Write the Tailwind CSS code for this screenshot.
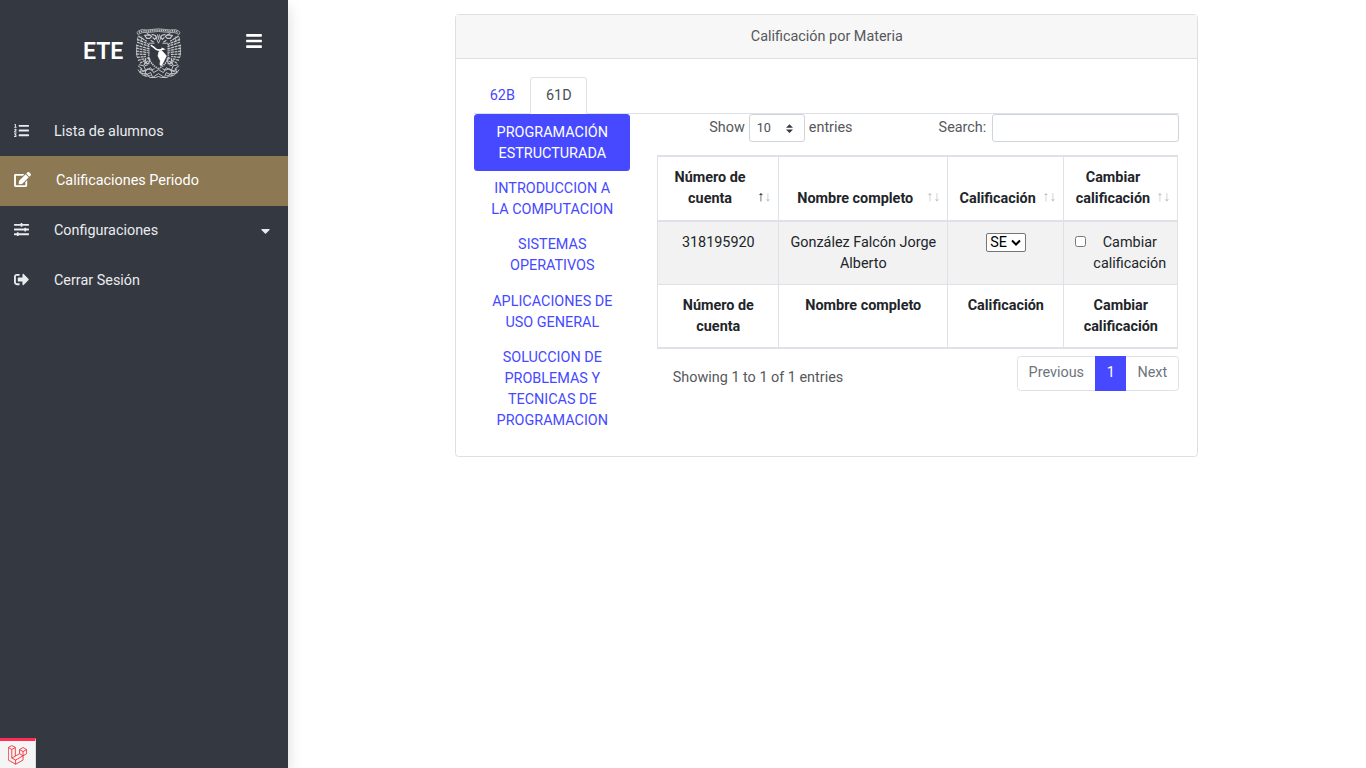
<!DOCTYPE html>
<html lang="es">
<head>
<meta charset="utf-8">
<title>Calificación por Materia</title>
<script src="https://cdn.jsdelivr.net/npm/@tailwindcss/browser@4"></script>
</head>
<body class="flex h-[768px] overflow-hidden bg-white font-[Roboto,sans-serif] text-[14.4px] leading-[21.12px] text-[#212529]">
<aside class="relative h-full w-72 shrink-0 bg-[#343840] text-[#e9ecef] shadow-[0_7px_14px_rgba(0,0,0,0.15)]">
  <div class="flex h-[106px] pl-[83px] pt-[27px]">
    <span class="w-[52px] pt-[10px] text-[23px] font-semibold leading-[30px] text-white">ETE</span>
    <svg class="h-[54px] w-[47px]" viewBox="0 0 48 54" fill="none" stroke="#c4c6c9" stroke-width=".8">
      <path d="M2 5Q5 1 12 2.5Q24 0 36 2.5Q43 1 46 5L45 7Q40 4 35 5Q24 3 13 5Q8 4 3 7Z"/>
      <path d="M4 4.7Q9 2.7 13 3.8Q24 1.7 35 3.8Q39 2.7 44 4.7" stroke-dasharray="1.2 .7" stroke-width="1.6"/>
      <g id="wing">
        <path d="M4 8Q2 10 3 14M2 18Q1 24 2 30M7 9L6 15"/>
        <path d="M4 9L12 14M2 12L13 16.500M2 15L14 19M1 18L14 21.500M1 21L13 23.500M1 24L13 25.500M1 27L12 27.500M2 30.500L11 29.500M3 33.500L11 31.500M5 36.500L10 33.500" stroke-width="1.300" stroke-dasharray="3 .7"/>
        <path d="M10 8L15 7.500L17 9L15 11L12 11Z" stroke-width="1.2"/>
        <path d="M17 7L21 8L22 10L20 12L18 10M16 13L19 15M12 6L15 7.500" stroke-width="1.2"/>
        <path d="M12 31L15 32L14 37L10 36L11 32M9 38L13 34M10 39L13 38" stroke-width="1.3"/>
        <path d="M14 16.500V30Q15 37 24 42" stroke-dasharray="1.400 .8" stroke-width="1.700"/>
        <path d="M3 39L7 42L5 46L11 44L10 49L16 46L18 51L24 47M4 38L9 39L11 44L16 41L19 46L24 43M3 43L6 47L12 47L15 51L21 51L24 50M5 42Q9 46 13 42Q17 45 20 42M7 48Q11 51 16 49" stroke-width="1"/>
      </g>
      <use href="#wing" transform="matrix(-1 0 0 1 48 0)"/>
      <path d="M21 9L24 16L27 9M23 7L24 12L25 7M14 16H20M28 16H34" stroke-width="1"/>
      <path d="M16 18L19 20L22 22.500L25 23L29 22L27 21" stroke="#fff" stroke-width="1.600"/>
      <path d="M24.500 24.500L27 23.500L30 26.500L32 29L30 33L27 39L25.500 38L26 34L23.500 29Z" fill="#fff" stroke="#fff"/>
    </svg>
    <svg class="ml-[64px] mt-[5px] h-[18px] w-[16px]" viewBox="0 0 448 512" fill="#fff"><path d="M16 132h416c8.800 0 16-7.200 16-16V76c0-8.800-7.200-16-16-16H16C7.200 60 0 67.200 0 76v40c0 8.800 7.200 16 16 16zm0 160h416c8.800 0 16-7.200 16-16v-40c0-8.800-7.200-16-16-16H16c-8.800 0-16 7.200-16 16v40c0 8.800 7.200 16 16 16zm0 160h416c8.800 0 16-7.200 16-16v-40c0-8.800-7.200-16-16-16H16c-8.800 0-16 7.200-16 16v40c0 8.800 7.200 16 16 16z"/></svg>
  </div>
  <nav>
    <a class="flex h-[50px] items-center pl-[14px]">
      <svg class="-mt-px mr-[25px] h-[15px] w-[15px]" viewBox="0 0 512 512" fill="currentColor"><path d="M61.77 401l17.5-20.15a19.92 19.92 0 0 0 5.07-14.19v-3.31C84.34 356 80.5 352 73 352H16a8 8 0 0 0-8 8v16a8 8 0 0 0 8 8h22.83a157.41 157.41 0 0 0-11 12.31l-5.61 7c-4 5.07-5.25 10.13-2.8 14.88l1.05 1.93c3 5.76 6.29 7.88 12.25 7.88h4.73c10.33 0 15.94 2.44 15.94 9.09 0 4.72-4.2 8.22-14.36 8.22a41.54 41.54 0 0 1-15.47-3.12c-6.49-3.88-11.74-3.5-15.6 3.12l-5.59 9.31c-3.72 6.13-3.19 11.72 2.63 15.94 7.71 4.69 20.38 9.44 37 9.44 34.16 0 48.5-22.75 48.5-44.12-.03-14.38-9.12-29.76-28.73-34.88zM496 224H176a16 16 0 0 0-16 16v32a16 16 0 0 0 16 16h320a16 16 0 0 0 16-16v-32a16 16 0 0 0-16-16zm0-160H176a16 16 0 0 0-16 16v32a16 16 0 0 0 16 16h320a16 16 0 0 0 16-16V80a16 16 0 0 0-16-16zm0 320H176a16 16 0 0 0-16 16v32a16 16 0 0 0 16 16h320a16 16 0 0 0 16-16v-32a16 16 0 0 0-16-16zM16 160h64a8 8 0 0 0 8-8v-16a8 8 0 0 0-8-8H64V40a8 8 0 0 0-8-8H32a8 8 0 0 0-7.14 4.42l-8 16A8 8 0 0 0 24 64h8v64H16a8 8 0 0 0-8 8v16a8 8 0 0 0 8 8zm-3.91 160H80a8 8 0 0 0 8-8v-16a8 8 0 0 0-8-8H41.32c3.29-10.29 48.34-18.68 48.34-56.44 0-29.06-25-39.56-44.47-39.56-21.36 0-33.8 10-40.46 18.75-4.37 5.59-3 10.84 2.8 15.37l8.58 6.88c5.61 4.56 11 2.47 16.12-2.44a13.44 13.44 0 0 1 9.46-3.84c3.33 0 9.28 1.56 9.28 8.75C51 248.19 0 257.31 0 304.59v4C0 316 5.08 320 12.09 320z"/></svg>
      <span class="pt-px">Lista de alumnos</span>
    </a>
    <a class="flex h-[50px] items-center bg-[#8c7853] pl-[14px] pb-px text-white">
      <svg class="-mt-[2px] mr-[25px] h-[15px] w-[17px]" viewBox="0 0 576 512" fill="currentColor"><path d="M402.600 83.200l90.200 90.200c3.800 3.800 3.800 10 0 13.800L274.400 405.600l-92.800 10.300c-12.400 1.400-22.900-9.100-21.500-21.500l10.300-92.800L388.800 83.200c3.800-3.800 10-3.800 13.800 0zm162-22.900l-48.800-48.800c-15.200-15.200-39.900-15.200-55.200 0l-35.400 35.400c-3.800 3.800-3.800 10 0 13.800l90.200 90.200c3.800 3.800 10 3.800 13.800 0l35.400-35.400c15.200-15.300 15.200-40 0-55.200zM384 346.200V448H64V128h229.800c3.200 0 6.200-1.300 8.500-3.500l40-40c7.600-7.600 2.200-20.500-8.500-20.500H48C21.500 64 0 85.500 0 112v352c0 26.500 21.500 48 48 48h352c26.500 0 48-21.500 48-48V306.200c0-10.700-12.900-16-20.500-8.500l-40 40c-2.200 2.300-3.500 5.300-3.500 8.500z"/></svg>
      <span>Calificaciones Periodo</span>
    </a>
    <a class="flex h-[50px] items-center pl-[14px] pb-px">
      <svg class="-mt-[2px] mr-[25px] h-[15px] w-[15px]" viewBox="0 0 512 512" fill="currentColor"><path d="M496 384H160v-16c0-8.800-7.200-16-16-16h-32c-8.800 0-16 7.200-16 16v16H16c-8.800 0-16 7.200-16 16v32c0 8.800 7.200 16 16 16h80v16c0 8.800 7.200 16 16 16h32c8.800 0 16-7.200 16-16v-16h336c8.800 0 16-7.200 16-16v-32c0-8.800-7.200-16-16-16zm0-160h-80v-16c0-8.800-7.200-16-16-16h-32c-8.800 0-16 7.200-16 16v16H16c-8.800 0-16 7.200-16 16v32c0 8.800 7.200 16 16 16h336v16c0 8.800 7.200 16 16 16h32c8.800 0 16-7.200 16-16v-16h80c8.800 0 16-7.200 16-16v-32c0-8.800-7.200-16-16-16zm0-160H288V48c0-8.800-7.200-16-16-16h-32c-8.800 0-16 7.200-16 16v16H16C7.200 64 0 71.200 0 80v32c0 8.800 7.200 16 16 16h208v16c0 8.800 7.200 16 16 16h32c8.800 0 16-7.200 16-16v-16h208c8.800 0 16-7.200 16-16V80c0-8.800-7.200-16-16-16z"/></svg>
      <span>Configuraciones</span>
      <svg class="ml-auto mr-[18px] mt-[2px] h-[5px] w-[9px]" viewBox="0 0 9 5" fill="currentColor"><path d="M.8 0h7.400q.8.300.300 1L5 4.500q-.5.400-1 0L.5 1Q0 .3.800 0z"/></svg>
    </a>
    <a class="flex h-[50px] items-center pl-[14px] pb-px">
      <svg class="-mt-[2px] mr-[25px] h-[15px] w-[15px]" viewBox="0 0 512 512" fill="currentColor"><path d="M497 273L329 441c-15 15-41 4.500-41-17v-96H152c-13.300 0-24-10.700-24-24v-96c0-13.300 10.700-24 24-24h136V88c0-21.400 25.900-32 41-17l168 168c9.300 9.400 9.300 24.600 0 34zM192 436v-40c0-6.600-5.400-12-12-12H96c-17.700 0-32-14.300-32-32V160c0-17.700 14.300-32 32-32h84c6.600 0 12-5.400 12-12V76c0-6.600-5.400-12-12-12H96c-53 0-96 43-96 96v192c0 53 43 96 96 96h84c6.600 0 12-5.400 12-12z"/></svg>
      <span>Cerrar Sesión</span>
    </a>
  </nav>
  <div class="absolute bottom-0 left-0 h-[30px] w-[36px] border-r border-t-[3px] border-r-[#ddd] border-t-[#ff2d55] bg-[#f5f5f5] pl-[8px] pt-[4px]">
    <svg class="h-[20px] w-[19px]" viewBox="0 0 50 52" fill="none" stroke="#f8202a" stroke-width="2.200" stroke-linejoin="round"><path d="M.8 6.300L10 1l9.300 5.300L10 11.600zV39.300L20 50.300L39.600 39.300V28L20 39.300V50.300M10 11.600V34L20 39.300M19.300 6.300V28.600M10 34L30.400 22.700M39.600 28L30.400 22.700V11.800L39.800 6.300L49 11.800L39.600 17L30.400 11.800M39.600 17V28L49 22.700V11.800"/></svg>
  </div>
</aside>

<main class="flex-1 pl-[167.3px] pt-[14px]">
  <section class="h-[443px] w-[743px] rounded-[3.500px] border border-[#dfdfdf] bg-white text-center text-[#56585b]">
    <header class="h-[44px] border-b border-[#dfdfdf] bg-[#f7f7f7] pt-[11px]">Calificación por Materia</header>
    <div class="px-[18px] pt-[18px]">
      <div class="flex h-[37px] border-b border-[#dee2e6]">
        <a class="w-[56px] pt-[8px] text-[#4649ff]">62B</a>
        <a class="h-[37px] w-[57px] rounded-t-[3.500px] border border-b-white border-[#dee2e6] bg-white pt-[7px] text-[#495057]">61D</a>
      </div>
      <div class="flex">
        <nav class="w-[156px] shrink-0 text-[#4649ff]">
          <a class="block rounded-[3.500px] bg-[#4649ff] px-[14px] pb-[7.100px] pt-[7.600px] text-white">PROGRAMACIÓN ESTRUCTURADA</a>
          <a class="block px-[14px] py-[7.040px]">INTRODUCCION A LA COMPUTACION</a>
          <a class="block px-[14px] py-[7.040px]">SISTEMAS OPERATIVOS</a>
          <a class="block px-[14px] py-[7.040px]">APLICACIONES DE USO GENERAL</a>
          <a class="block px-[14px] py-[7.040px] leading-[21px]">SOLUCCION DE PROBLEMAS Y TECNICAS DE PROGRAMACION</a>
        </nav>
        <div class="ml-[27px] w-[522px]">
          <div class="flex h-[41px]">
            <label class="ml-[52px] flex pt-[3px]">Show
              <span class="-mt-[3px] ml-[4px] mr-[4px] flex h-[28px] w-[56px] items-center justify-between rounded-[3px] border border-[#ced4da] pl-[7px] pr-[11px] text-[12.600px] text-[#495057]">10
                <svg class="h-[9px] w-[7px]" viewBox="0 0 4 5" fill="#343a40"><path d="M2 0L0 2h4zm0 5L0 3h4z"/></svg>
              </span>entries</label>
            <label class="ml-auto flex pt-[3px]">Search:<span class="-mt-[3px] ml-[6px] h-[28px] w-[187px] rounded-[3px] border border-[#ced4da] bg-white"></span></label>
          </div>
          <table class="w-[521px] table-fixed border-separate border-spacing-0 border border-[#dee2e6] text-[#212529]">
            <colgroup><col class="w-[121px]"><col class="w-[169px]"><col class="w-[116px]"><col class="w-[113px]"></colgroup>
            <thead>
              <tr class="h-[66px] align-bottom font-bold">
                <th class="border-b-2 border-r border-t border-[#dee2e6] p-0 pb-[11px]"><div class="flex items-end justify-between pl-[13.300px] pr-[7px]"><span class="w-[77px]">Número de cuenta</span><span class="flex pb-[2px] text-[14.4px] font-normal"><i class="w-[7px] not-italic">↑</i><i class="w-[7px] not-italic opacity-30">↓</i></span></div></th>
                <th class="border-b-2 border-r border-t border-[#dee2e6] p-0 pb-[11px]"><div class="flex items-end justify-between pl-[18px] pr-[7px]"><span>Nombre completo</span><span class="flex pb-[2px] text-[14.4px] font-normal opacity-30"><i class="w-[7px] not-italic">↑</i><i class="w-[7px] not-italic">↓</i></span></div></th>
                <th class="border-b-2 border-r border-t border-[#dee2e6] p-0 pb-[11px]"><div class="flex items-end justify-between pl-[11.300px] pr-[7px]"><span>Calificación</span><span class="flex pb-[2px] text-[14.4px] font-normal opacity-30"><i class="w-[7px] not-italic">↑</i><i class="w-[7px] not-italic">↓</i></span></div></th>
                <th class="border-b-2 border-t border-[#dee2e6] p-0 pb-[11px]"><div class="flex items-end justify-between pl-[10.700px] pr-[7px]"><span class="w-[76px]">Cambiar calificación</span><span class="flex pb-[2px] text-[14.4px] font-normal opacity-30"><i class="w-[7px] not-italic">↑</i><i class="w-[7px] not-italic">↓</i></span></div></th>
              </tr>
            </thead>
            <tbody>
              <tr class="h-[62px] bg-[#f2f2f2] align-top">
                <td class="border-r border-[#dee2e6] p-0 pt-[10px]">318195920</td>
                <td class="border-r border-[#dee2e6] px-[10px] pt-[10px] pb-0">González Falcón Jorge Alberto</td>
                <td class="border-r border-[#dee2e6] p-0 pt-[11px]"><span class="ml-[38px] flex h-[19px] w-[40px] items-center justify-between rounded-[2px] border border-[#767676] bg-white pl-[3px] pr-[4px] text-black">SE<svg class="h-[7px] w-[10px]" viewBox="0 0 10 7" fill="none" stroke="#000" stroke-width="2"><path d="M1 1.500L5 5.500L9 1.500"/></svg></span></td>
                <td class="p-0 pt-[10px]"><div class="flex pl-[11px]"><span class="mt-[4px] h-[11px] w-[11px] shrink-0 rounded-[2.500px] border border-[#767676] bg-white"></span><span class="ml-[7px] w-[73px]">Cambiar calificación</span></div></td>
              </tr>
            </tbody>
            <tfoot>
              <tr class="h-[64px] align-top font-bold">
                <th class="border-b border-r border-t border-[#dee2e6] px-[20px] pt-[10px] pb-0">Número de cuenta</th>
                <th class="border-b border-r border-t border-[#dee2e6] p-0 pt-[10px]">Nombre completo</th>
                <th class="border-b border-r border-t border-[#dee2e6] p-0 pt-[10px]">Calificación</th>
                <th class="border-b border-t border-[#dee2e6] px-[10px] pt-[10px] pb-0">Cambiar calificación</th>
              </tr>
            </tfoot>
          </table>
          <div class="flex justify-between pl-[15.500px] pt-[7px]">
            <span class="pt-[11px]">Showing 1 to 1 of 1 entries</span>
            <div class="flex h-[35px] w-[162px] rounded-[3.500px] border border-[#dee2e6] text-[#6c757d]">
              <span class="w-[77px] pt-[5px] pr-[1px]">Previous</span>
              <span class="-my-px w-[31px] bg-[#4649ff] pt-[6px] text-white">1</span>
              <span class="flex-1 pt-[5px]">Next</span>
            </div>
          </div>
        </div>
      </div>
    </div>
  </section>
</main>
</body>
</html>
